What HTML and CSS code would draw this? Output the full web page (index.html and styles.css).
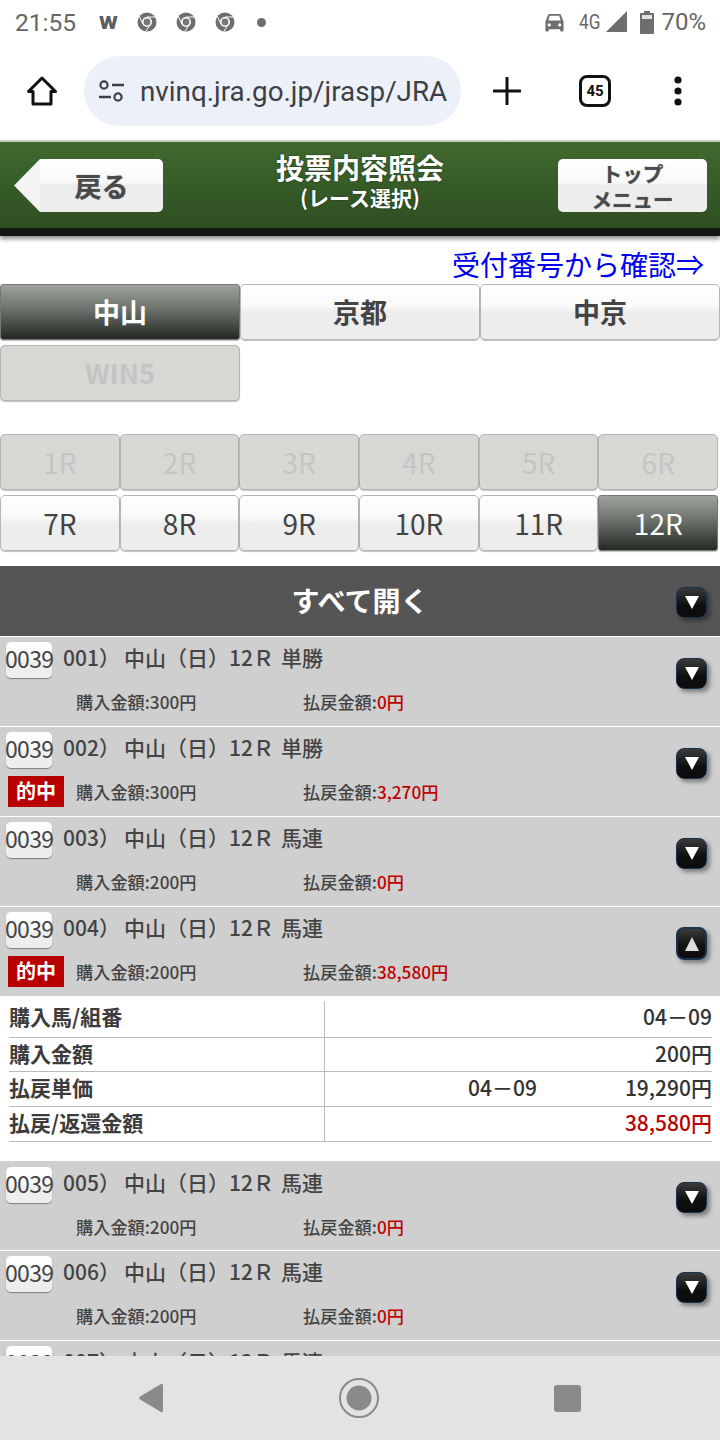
FILE: index.html
```html
<!DOCTYPE html>
<html lang="ja">
<head>
<meta charset="utf-8">
<title>投票内容照会</title>
<link rel="stylesheet" href="styles.css">
</head>
<body>
<div class="phone">
  <div class="status">
    <span class="time">21:55</span>
    <span class="w">W</span>
    <svg class="chrome" viewBox="0 0 20 20"><circle cx="10" cy="10" r="9.5" fill="#6e6e6e"/><circle cx="10" cy="10" r="5" fill="#fff"/><circle cx="10" cy="10" r="3.4" fill="#777"/><path d="M10 5H19M6 12L2 4M13 13L9 19" stroke="#fff" stroke-width="1"/></svg>
    <svg class="chrome" viewBox="0 0 20 20"><circle cx="10" cy="10" r="9.5" fill="#6e6e6e"/><circle cx="10" cy="10" r="5" fill="#fff"/><circle cx="10" cy="10" r="3.4" fill="#777"/><path d="M10 5H19M6 12L2 4M13 13L9 19" stroke="#fff" stroke-width="1"/></svg>
    <svg class="chrome" viewBox="0 0 20 20"><circle cx="10" cy="10" r="9.5" fill="#6e6e6e"/><circle cx="10" cy="10" r="5" fill="#fff"/><circle cx="10" cy="10" r="3.4" fill="#777"/><path d="M10 5H19M6 12L2 4M13 13L9 19" stroke="#fff" stroke-width="1"/></svg>
    <span class="dot"></span>
    <span class="spacer"></span>
    <svg class="car" viewBox="0 0 22 20"><path d="M4 2.5C4.300 1.500 5 1 6 1H16C17 1 17.700 1.500 18 2.500L20.500 9V18.500C20.500 19 20 19.500 19.500 19.500H18C17.500 19.500 17 19 17 18.500V17H5V18.500C5 19 4.500 19.500 4 19.500H2.500C2 19.500 1.500 19 1.500 18.500V9ZM4.500 8H17.500L16 3H6Z" fill="#6e6e6e"/><circle cx="5.500" cy="12.500" r="1.700" fill="#fff"/><circle cx="16.500" cy="12.500" r="1.700" fill="#fff"/></svg>
    <span class="net">4G</span>
    <svg class="signal" viewBox="0 0 21 21"><path d="M21 0V21H0Z" fill="#6e6e6e"/></svg>
    <svg class="batt" viewBox="0 0 14 23"><path d="M4 0H10V2H13C13.600 2 14 2.400 14 3V22C14 22.600 13.600 23 13 23H1C.4 23 0 22.600 0 22V3C0 2.400 .4 2 1 2H4Z" fill="#6e6e6e"/><rect x="2" y="4" width="10" height="4" fill="#fff" opacity=".8"/></svg>
    <span class="pct">70%</span>
  </div>

  <div class="toolbar">
    <svg class="home" viewBox="0 0 32 32"><path d="M16 3L2.500 16.500H7V29H25V16.500H29.500Z" fill="none" stroke="#111" stroke-width="3" stroke-linejoin="round"/></svg>
    <div class="omni">
      <svg class="tune" viewBox="0 0 26 22"><circle cx="6" cy="5" r="3.600" fill="none" stroke="#3c4043" stroke-width="2.200"/><path d="M14 5H26M1 17H13" stroke="#3c4043" stroke-width="2.600"/><circle cx="20" cy="17" r="3.600" fill="none" stroke="#3c4043" stroke-width="2.200"/></svg>
      <span class="url">nvinq.jra.go.jp/jrasp/JRA</span>
    </div>
    <svg class="plus" viewBox="0 0 28 28"><path d="M14 1V27M1 14H27" stroke="#111" stroke-width="3" stroke-linecap="round"/></svg>
    <span class="tabs-count">45</span>
    <svg class="more" viewBox="0 0 10 30"><circle cx="5" cy="4" r="3.600" fill="#111"/><circle cx="5" cy="15" r="3.600" fill="#111"/><circle cx="5" cy="26" r="3.600" fill="#111"/></svg>
  </div>

  <header class="site-head">
    <div class="back"><span class="back-arrow"></span><span class="back-body">戻る</span></div>
    <div class="title"><div class="title-main">投票内容照会</div><div class="title-sub">(レース選択)</div></div>
    <div class="top-btn">トップ<br>メニュー</div>
  </header>
  <div class="head-edge"></div>

  <div class="content">
    <div class="link-row"><a class="link">受付番号から確認⇒</a></div>

    <div class="venues">
      <div class="btn btn-active venue">中山</div>
      <div class="btn venue">京都</div>
      <div class="btn venue">中京</div>
      <div class="btn btn-off venue">WIN5</div>
    </div>

    <div class="races">
      <div class="btn btn-off race">1R</div>
      <div class="btn btn-off race">2R</div>
      <div class="btn btn-off race">3R</div>
      <div class="btn btn-off race">4R</div>
      <div class="btn btn-off race">5R</div>
      <div class="btn btn-off race">6R</div>
      <div class="btn race">7R</div>
      <div class="btn race">8R</div>
      <div class="btn race">9R</div>
      <div class="btn race">10R</div>
      <div class="btn race">11R</div>
      <div class="btn btn-active race">12R</div>
    </div>

    <div class="open-all">すべて開く<span class="toggle toggle-bar"><span class="tri"></span></span></div>

    <div class="row">
      <div class="row-top"><span class="rcpt">0039</span><span class="seq">001）</span><span class="race-name">中山（日）12Ｒ</span><span class="kind">単勝</span></div>
      <div class="row-bottom"><span class="hit-slot"></span><span class="buy">購入金額:300円</span><span class="pay">払戻金額:<em>0円</em></span></div>
      <span class="toggle"><span class="tri"></span></span>
    </div>
    <div class="row">
      <div class="row-top"><span class="rcpt">0039</span><span class="seq">002）</span><span class="race-name">中山（日）12Ｒ</span><span class="kind">単勝</span></div>
      <div class="row-bottom"><span class="hit-slot"><span class="hit">的中</span></span><span class="buy">購入金額:300円</span><span class="pay">払戻金額:<em>3,270円</em></span></div>
      <span class="toggle"><span class="tri"></span></span>
    </div>
    <div class="row">
      <div class="row-top"><span class="rcpt">0039</span><span class="seq">003）</span><span class="race-name">中山（日）12Ｒ</span><span class="kind">馬連</span></div>
      <div class="row-bottom"><span class="hit-slot"></span><span class="buy">購入金額:200円</span><span class="pay">払戻金額:<em>0円</em></span></div>
      <span class="toggle"><span class="tri"></span></span>
    </div>
    <div class="row row-open">
      <div class="row-top"><span class="rcpt">0039</span><span class="seq">004）</span><span class="race-name">中山（日）12Ｒ</span><span class="kind">馬連</span></div>
      <div class="row-bottom"><span class="hit-slot"><span class="hit">的中</span></span><span class="buy">購入金額:200円</span><span class="pay">払戻金額:<em>38,580円</em></span></div>
      <span class="toggle toggle-open"><span class="tri tri-up"></span></span>
    </div>
    <div class="detail">
      <div class="d-row"><div class="d-label">購入馬/組番</div><div class="d-val"><span>04－09</span></div></div>
      <div class="d-row"><div class="d-label">購入金額</div><div class="d-val"><span>200円</span></div></div>
      <div class="d-row"><div class="d-label">払戻単価</div><div class="d-val"><span class="d-combo">04－09</span><span>19,290円</span></div></div>
      <div class="d-row"><div class="d-label">払戻/返還金額</div><div class="d-val d-red"><span>38,580円</span></div></div>
    </div>
    <div class="row row-after">
      <div class="row-top"><span class="rcpt">0039</span><span class="seq">005）</span><span class="race-name">中山（日）12Ｒ</span><span class="kind">馬連</span></div>
      <div class="row-bottom"><span class="hit-slot"></span><span class="buy">購入金額:200円</span><span class="pay">払戻金額:<em>0円</em></span></div>
      <span class="toggle"><span class="tri"></span></span>
    </div>
    <div class="row">
      <div class="row-top"><span class="rcpt">0039</span><span class="seq">006）</span><span class="race-name">中山（日）12Ｒ</span><span class="kind">馬連</span></div>
      <div class="row-bottom"><span class="hit-slot"></span><span class="buy">購入金額:200円</span><span class="pay">払戻金額:<em>0円</em></span></div>
      <span class="toggle"><span class="tri"></span></span>
    </div>
    <div class="row">
      <div class="row-top"><span class="rcpt">0039</span><span class="seq">007）</span><span class="race-name">中山（日）12Ｒ</span><span class="kind">馬連</span></div>
    </div>
  </div>

  <nav class="navbar">
    <svg class="nav-back" viewBox="0 0 24 30"><path d="M22 1C23 .4 24 1 24 2.500V27.500C24 29 23 29.600 22 29L1 16.500C0 15.800 0 14.200 1 13.500Z" fill="#8a8a8a"/></svg>
    <svg class="nav-home" viewBox="0 0 40 40"><circle cx="20" cy="20" r="19" fill="none" stroke="#8a8a8a" stroke-width="2"/><circle cx="20" cy="20" r="12.500" fill="#8a8a8a"/></svg>
    <span class="nav-square"></span>
  </nav>
</div>
</body>
</html>
```
FILE: styles.css
```css
* { box-sizing: border-box; }
html, body { margin: 0; padding: 0; background: #fff; }
.phone {
  width: 720px; height: 1440px; overflow: hidden;
  display: flex; flex-direction: column;
  font-family: "Noto Sans CJK JP", "Noto Sans", sans-serif;
  color: #444;
}

/* status bar */
.status {
  height: 42px; flex: none; display: flex; align-items: center;
  padding: 2px 14px 0 15px; color: #666;
  font-family: Roboto, sans-serif;
}
.time { font-size: 24.500px; width: 84px; }
.w { font-size: 18px; font-weight: 900; width: 38px; color: #5e5e5e; transform: scaleX(1.200); transform-origin: left; }
.chrome { width: 20px; height: 20px; margin-right: 19px; flex: none; }
.dot { width: 9px; height: 9px; border-radius: 50%; background: #6e6e6e; margin-left: 3px; }
.spacer { flex: 1; }
.car { width: 21px; height: 19px; margin-right: 14px; flex: none; }
.net { font-size: 21px; width: 27px; transform: scaleX(.82); transform-origin: left; flex: none; }
.signal { width: 21px; height: 21px; margin: -2px 13px 0 0; flex: none; }
.batt { width: 14px; height: 23px; margin-right: 7px; flex: none; }
.pct { font-size: 24px; }

/* browser toolbar */
.toolbar {
  height: 98px; flex: none; display: flex; align-items: center; position: relative;
  padding: 0 0 0 26px;
}
.home { width: 32px; height: 32px; margin-right: 26px; flex: none; }
.omni {
  width: 377px; height: 70px; border-radius: 35px; background: #ecf1f9;
  display: flex; align-items: center; padding-left: 14px; flex: none;
}
.tune { width: 26px; height: 22px; margin-right: 16px; flex: none; }
.url { font-family: Roboto, sans-serif; font-size: 27.800px; color: #3c4043; white-space: nowrap; }
.plus { width: 28px; height: 28px; margin-left: 32px; flex: none; }
.tabs-count {
  width: 32px; height: 32px; margin-left: 58px; border: 3px solid #111; border-radius: 8px; flex: none;
  font: 700 15px/26px Roboto, sans-serif; color: #111; text-align: center;
}
.more { width: 10px; height: 30px; margin-left: 62px; flex: none; }

/* site header */
.site-head {
  height: 88px; flex: none; border-top: 2px solid #c9d0c0; position: relative;
  background: linear-gradient(#3f692e, #2f4e22);
  display: flex; align-items: flex-start; justify-content: center;
}
.head-edge {
  height: 8px; flex: none; background: #151515; box-shadow: 0 3px 4px rgba(0,0,0,.45); position: relative; z-index: 1;
}
.back {
  position: absolute; left: 14px; top: 17px; height: 53px; width: 149px; display: flex;
}
.back-arrow {
  width: 26px; height: 53px; flex: none; background: #f4f4f4;
  clip-path: polygon(100% 0, 100% 100%, 0 50%);
}
.back-body {
  flex: 1; border-radius: 0 5px 5px 0; text-align: center;
  background: linear-gradient(#fff 0%, #f8f8f8 45%, #ececec 50%, #eee 100%);
  font-size: 27px; font-weight: 700; line-height: 54px; color: #4a4a4a;
  text-shadow: 0 0 1px #777;
}
.title { text-align: center; color: #fff; font-weight: 700; width: 280px; text-shadow: 0 0 2px rgba(0,0,0,.5); }
.title-main { font-size: 28px; line-height: 34px; margin-top: 8px; }
.title-sub { font-size: 21px; line-height: 26px; }
.top-btn {
  position: absolute; right: 13px; top: 17px; width: 149px; height: 53px; border-radius: 5px;
  background: linear-gradient(#fff 0%, #f8f8f8 45%, #ececec 50%, #eee 100%);
  text-align: center; font-size: 20.500px; font-weight: 700; line-height: 26px; color: #4a4a4a;
  padding-top: 1px; text-shadow: 0 0 1px #777;
}

/* content */
.content { flex: 1; min-height: 0; overflow: hidden; }
.link-row { height: 48px; text-align: right; padding-right: 16px; }
.link { color: #0000ee; font-size: 28px; line-height: 56px; }

.btn {
  border: 1px solid #b5b5b5; border-radius: 5px; text-align: center;
  background: linear-gradient(#fff 0%, #f9f9f9 40%, #ededed 50%, #ededed 100%);
  box-shadow: 0 1px 1px rgba(0,0,0,.25);
  color: #444;
}
.btn-active {
  background: linear-gradient(#9fa39e 0%, #6c716b 45%, #232a22 100%);
  border-color: #777; color: #fff; border-radius: 3px;
}
.btn-off { background: #d8d7d3; color: #c4c4c4; }

.venues {
  display: grid; grid-template-columns: repeat(3, 240px); grid-auto-rows: 56px; row-gap: 5px;
}
.venue { font-size: 27px; font-weight: 700; line-height: 54px; }
.races {
  display: grid; grid-template-columns: repeat(6, 119.700px); grid-auto-rows: 56px; row-gap: 5px;
  margin-top: 33px;
}
.race { font-size: 28px; line-height: 54px; font-weight: 400; }
.open-all {
  margin-top: 15px; height: 70px; background: #555; color: #fff; text-align: center;
  font-size: 28px; font-weight: 700; line-height: 68px; position: relative;
}

/* rows */
.row {
  height: 90px; background: #cfcfcf; position: relative; border-top: 1px solid #fff; padding: 5px 0 0 6px;
}
.row-after { margin-top: -1px; padding-top: 6px; }
.row-top { display: flex; align-items: flex-start; height: 36px; font-size: 21px; font-weight: 500; line-height: 30px; color: #444; white-space: nowrap; }
.rcpt {
  width: 46px; height: 36px; border-radius: 5px; text-align: center; flex: none;
  background: linear-gradient(#fff, #f9f9f9 45%, #eee 55%, #eee);
  box-shadow: 0 1px 1px rgba(0,0,0,.4); font-size: 23px; font-weight: 400; line-height: 32px;
  letter-spacing: -.700px; color: #444; margin-right: 11px; text-indent: -1px;
}
.seq { width: 61px; flex: none; }
.race-name { width: 157px; flex: none; }
.kind { flex: none; }
.row-bottom { display: flex; align-items: center; height: 31px; margin-top: 8px; font-size: 17.200px; color: #444; font-weight: 500; }
.hit-slot { width: 70px; flex: none; padding-left: 2px; }
.hit {
  display: block; width: 56px; height: 31px; margin-top: -1px; background: #b90000; color: #fff;
  font-size: 20px; font-weight: 700; text-align: center; line-height: 30px;
}
.buy { width: 227px; flex: none; }
.pay em { font-style: normal; color: #c00000; }

.toggle {
  position: absolute; right: 13px; top: 21px; width: 31px; height: 31px; border-radius: 8px;
  background: linear-gradient(#3a3a3a, #0f0f0f 60%, #0c0c0c);
  border: 1px solid #1c3350; box-shadow: 3px 3px 4px rgba(0,0,0,.4);
  display: flex; align-items: center; justify-content: center;
}
.toggle-bar { top: 21px; }
.toggle-open { top: 20px; height: 33px; border: 2px solid #1c3350; }
.tri { width: 0; height: 0; border: 7px solid transparent; border-top: 13px solid #fff; border-bottom: 0; }
.tri-up { border-top: 0; border-bottom: 14px solid #ddd; }

/* detail */
.detail { height: 165px; background: #fff; padding: 5px 8px 0 9px; }
.d-row { display: flex; height: 35px; border-bottom: 1px solid #bbb; font-size: 21px; color: #333; line-height: 30px; }
.d-row:nth-child(1) { height: 37px; }
.d-row:nth-child(2) { height: 34px; }
.d-label { width: 316px; font-weight: 700; border-right: 1px solid #bbb; flex: none; color: #3c3c3c; }
.d-val { flex: 1; display: flex; justify-content: flex-end; font-weight: 500; }
.d-combo { margin-right: 88px; }
.d-red { color: #b90000; }

/* nav */
.navbar {
  height: 84px; flex: none; background: #e3e3e3; position: relative;
  display: flex; align-items: center;
}
.nav-back { width: 24px; height: 30px; margin-left: 139px; flex: none; }
.nav-home { width: 40px; height: 40px; margin-left: 176px; flex: none; }
.nav-square { width: 27px; height: 27px; margin-left: 175px; background: #8a8a8a; border-radius: 3px; flex: none; }
```
